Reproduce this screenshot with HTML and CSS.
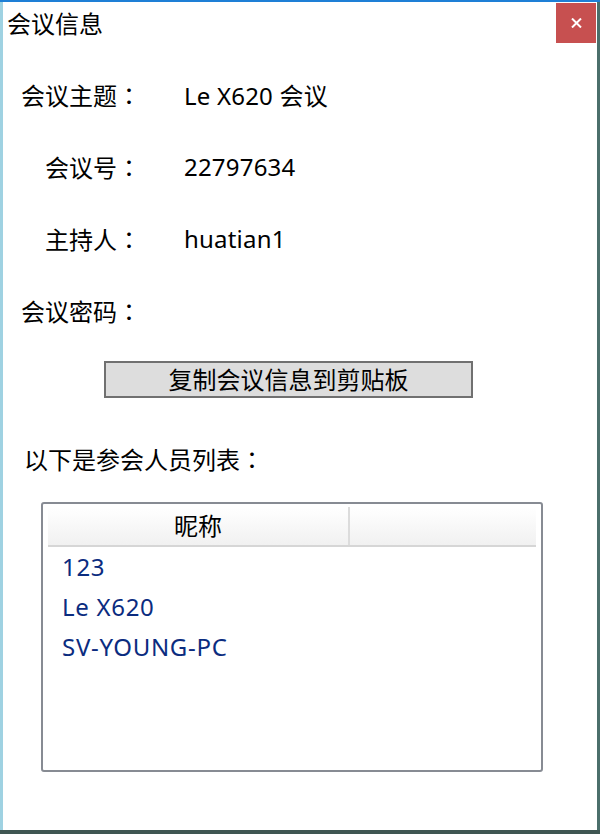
FILE: index.html
```html
<!DOCTYPE html>
<html lang="zh-CN">
<head>
  <meta charset="UTF-8" />
  <title>会议信息</title>
  <link rel="stylesheet" href="styles.css">
</head>
<body>

  <div class="window">
    <!-- barra de título -->
    <div class="titlebar">
      <span class="title">会议信息</span>
      <button class="close-button">
        <svg width="11" height="10" viewBox="0 0 11 10">
          <path d="M1 0.5 L10 9.5 M10 0.5 L1 9.5" stroke="#fff" stroke-width="2" fill="none" />
        </svg>
      </button>
    </div>

    <div class="content">
      <div class="info">
        <div class="row"><span class="label">会议主题<span class="colon">：</span></span><span class="value">Le X620 会议</span></div>
        <div class="row"><span class="label">会议号<span class="colon">：</span></span><span class="value">22797634</span></div>
        <div class="row"><span class="label">主持人<span class="colon">：</span></span><span class="value">huatian1</span></div>
        <div class="row"><span class="label">会议密码<span class="colon">：</span></span><span class="value"></span></div>
      </div>

      <button class="copy-button">复制会议信息到剪贴板</button>

      <div class="section-label">以下是参会人员列表<span class="colon">：</span></div>

      <!-- lista de participantes -->
      <div class="list">
        <div class="list-header">
          <div class="col col-name">昵称</div>
          <div class="col"></div>
        </div>
        <div class="list-item">123</div>
        <div class="list-item">Le X620</div>
        <div class="list-item">SV-YOUNG-PC</div>
      </div>
    </div>
  </div>

</body>
</html>
```

FILE: styles.css
```css
body {
  margin: 0;
  height: 834px;
  overflow: hidden;
  font-family: "Noto Sans", "Noto Sans CJK SC", sans-serif;
  color: #000;
  background:
    linear-gradient(to bottom, #1e7fd6 0 2px, transparent 2px),
    linear-gradient(to bottom, transparent 830px, #3f5652 830px),
    linear-gradient(to right, #9fd2e2 0 3px, #4b6f6b 3px);
}

.window {
  margin: 0 3px;
  height: 828px;
  border-top: 2px solid #1e7fd6;
  background: #fff;
  display: flex;
  flex-direction: column;
}

.titlebar {
  height: 44px;
  display: flex;
  justify-content: space-between;
  align-items: flex-start;
}

.title {
  font-size: 24px;
  line-height: 44px;
  padding-left: 4px;
}

.close-button {
  width: 40px;
  height: 40px;
  margin: 1px 1px 0 0;
  padding: 0;
  border: none;
  background: #c75050;
  display: flex;
  align-items: center;
  justify-content: center;
}

.content {
  padding-top: 12px;
}

.row {
  height: 72px;
  display: flex;
  align-items: center;
  font-size: 24px;
}

.label {
  width: 138px;
  text-align: right;
}

/* dois-pontos centrado na célula, como no original */
.colon {
  font-family: "Noto Sans CJK JP", sans-serif;
  font-feature-settings: "locl" 0;
}

.value {
  margin-left: 43px;
  letter-spacing: 0.2px;
}

.copy-button {
  display: block;
  margin: 15px 0 0 101px;
  width: 369px;
  height: 37px;
  padding: 0;
  border: 2px solid #707070;
  background: #dddddd;
  font-family: inherit;
  font-size: 24px;
  line-height: 33px;
  color: #000;
}

.section-label {
  margin: 45px 0 0 21px;
  height: 32px;
  line-height: 32px;
  font-size: 24px;
}

.list {
  margin: 27px 0 0 38px;
  width: 502px;
  height: 270px;
  box-sizing: border-box;
  border: 2px solid #878b93;
  border-radius: 3px;
  padding: 3px 5px 0 5px;
}

.list-header {
  display: flex;
  height: 40px;
  box-sizing: border-box;
  border-bottom: 2px solid #d6d6d6;
  background: linear-gradient(to bottom, #fff, #f1f1f1);
}

.col {
  flex: 1;
}

.col-name {
  flex: none;
  width: 300px;
  border-right: 2px solid #dcdcdc;
  text-align: center;
  font-size: 24px;
  line-height: 38px;
}

.list-item {
  height: 40px;
  line-height: 40px;
  padding-left: 14px;
  font-size: 24px;
  letter-spacing: 0.7px;
  color: #0b2c7f;
}
```
